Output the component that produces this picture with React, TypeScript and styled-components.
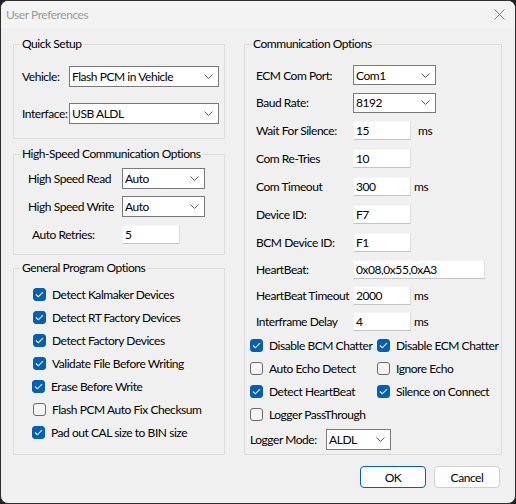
import React from "react";
import styled, { createGlobalStyle } from "styled-components";

const Global = createGlobalStyle`
  html, body { margin: 0; padding: 0; background: #1f1f1f; }
  body { font-family: Lato, "Liberation Sans", sans-serif; font-size: 12px; letter-spacing: -0.45px; color: #000; }
  * { box-sizing: border-box; }
`;

const Window = styled.div`
  width: 516px;
  height: 504px;
  background: #f0f0f0;
  border: 1px solid #2e2e2e;
  border-radius: 8px;
  overflow: hidden;
  display: flex;
  flex-direction: column;
`;

const TitleBar = styled.div`
  height: 27px;
  flex: none;
  background: #f3f3f3;
  display: flex;
  align-items: center;
  justify-content: space-between;
  padding: 0 10px 0 5px;
  color: #9a9a9a;
  font-size: 12px;
`;

const Columns = styled.div`
  display: flex;
  gap: 19px;
  padding: 16px 0 0 12px;
`;

const Column = styled.div<{ $w: number }>`
  width: ${(p) => p.$w}px;
  display: flex;
  flex-direction: column;
  gap: 15px;
`;

const Group = styled.div<{ $h: number; $mt?: number }>`
  border: 1px solid #dcdcdc;
  height: ${(p) => p.$h}px;
  margin-top: ${(p) => p.$mt ?? 0}px;
  display: flex;
  flex-direction: column;
`;

const GroupTitle = styled.div`
  margin: -9px 0 0 6px;
  padding: 0 2px;
  line-height: 16px;
  height: 16px;
  background: #f0f0f0;
  width: fit-content;
  white-space: nowrap;
`;

const Rows = styled.div<{ $pt: number; $pl: number; $gap?: number }>`
  display: flex;
  flex-direction: column;
  padding: ${(p) => p.$pt}px 0 0 ${(p) => p.$pl}px;
  gap: ${(p) => p.$gap ?? 0}px;
`;

const Row = styled.div<{ $h: number }>`
  display: flex;
  align-items: center;
  height: ${(p) => p.$h}px;
  white-space: nowrap;
`;

const Label = styled.span<{ $w: number; $ml?: number }>`
  width: ${(p) => p.$w}px;
  margin-left: ${(p) => p.$ml ?? 0}px;
  flex: none;
`;

const SelectBox = styled.div<{ $w: number; $h?: number }>`
  width: ${(p) => p.$w}px;
  height: ${(p) => p.$h ?? 21}px;
  background: #fff;
  border: 1px solid #7a7a7a;
  display: flex;
  align-items: center;
  justify-content: space-between;
  padding: 0 5px 0 2px;
  flex: none;
`;

const InputBox = styled.div<{ $w: number }>`
  width: ${(p) => p.$w}px;
  height: 19px;
  background: #fff;
  border: 1px solid #f4f4f4;
  border-bottom-color: #c4c4c4;
  border-right-color: #dedede;
  display: flex;
  align-items: center;
  padding: 0 0 0 2px;
  flex: none;
`;

const Unit = styled.span<{ $ml: number }>`
  margin-left: ${(p) => p.$ml}px;
`;

const CheckRow = styled.label<{ $shift?: number }>`
  display: flex;
  align-items: center;
  gap: 6px;
  height: 23px;
  margin-left: ${(p) => p.$shift ?? 0}px;
  white-space: nowrap;
`;

const Box = styled.span<{ $on: boolean }>`
  width: 13px;
  height: 13px;
  flex: none;
  border-radius: 3px;
  background: ${(p) => (p.$on ? "#005fb8" : "#f6f6f6")};
  border: 1px solid ${(p) => (p.$on ? "#005fb8" : "#6a6a6a")};
  display: flex;
  align-items: center;
  justify-content: center;
`;

const CheckGrid = styled.div`
  display: grid;
  grid-template-columns: 127px auto;
  padding-left: 5px;
`;

const Footer = styled.div`
  display: flex;
  justify-content: flex-end;
  gap: 8px;
  padding: 11px 15px 0 0;
`;

const Button = styled.button<{ $primary?: boolean }>`
  width: 66px;
  height: 22px;
  background: #fdfdfd;
  border: 1px solid ${(p) => (p.$primary ? "#005fb8" : "#d0d0d0")};
  border-radius: 4px;
  font: inherit;
  letter-spacing: inherit;
  color: #000;
  padding: 0;
`;

const Chevron = () => (
  <svg width="9" height="5" viewBox="0 0 9 5">
    <path d="M0.5 0.5 L4.5 4.5 L8.5 0.5" fill="none" stroke="#5a5a5a" strokeWidth="1" />
  </svg>
);

const Select = ({ value, w, h }: { value: string; w: number; h?: number }) => (
  <SelectBox $w={w} $h={h}>
    <span>{value}</span>
    <Chevron />
  </SelectBox>
);

const Check = ({ on, children, shift }: { on: boolean; children: React.ReactNode; shift?: number }) => (
  <CheckRow $shift={shift}>
    <Box $on={on}>
      {on && (
        <svg width="9" height="7" viewBox="0 0 9 7">
          <path d="M1 3.5 L3.3 5.8 L8 1.2" fill="none" stroke="#fff" strokeWidth="1.1" />
        </svg>
      )}
    </Box>
    <span>{children}</span>
  </CheckRow>
);

const fields: { label: string; kind: "select" | "input"; value: string; w?: number; h: number; unit?: number }[] = [
  { label: "ECM Com Port:", kind: "select", value: "Com1", h: 28 },
  { label: "Baud Rate:", kind: "select", value: "8192", h: 27 },
  { label: "Wait For Silence:", kind: "input", value: "15", h: 28, unit: 7 },
  { label: "Com Re-Tries", kind: "input", value: "10", h: 28 },
  { label: "Com Timeout", kind: "input", value: "300", h: 28, unit: 3 },
  { label: "Device ID:", kind: "input", value: "F7", h: 28 },
  { label: "BCM Device ID:", kind: "input", value: "F1", h: 28 },
  { label: "HeartBeat:", kind: "input", value: "0x08,0x55,0xA3", w: 132, h: 26 },
  { label: "HeartBeat Timeout", kind: "input", value: "2000", h: 26, unit: 3 },
  { label: "Interframe Delay", kind: "input", value: "4", h: 26, unit: 3 },
];

export default function App() {
  return (
    <>
      <Global />
      <Window>
        <TitleBar>
          <span>User Preferences</span>
          <svg width="11" height="11" viewBox="0 0 11 11">
            <path d="M0.5 0.5 L10.5 10.5 M10.5 0.5 L0.5 10.5" stroke="#7a7a7a" strokeWidth="1" />
          </svg>
        </TitleBar>
        <Columns>
          <Column $w={212}>
            <Group $h={95}>
              <GroupTitle>Quick Setup</GroupTitle>
              <Rows $pt={10} $pl={8} $gap={9}>
                <Row $h={28}>
                  <Label $w={47}>Vehicle:</Label>
                  <Select value="Flash PCM in Vehicle" w={150} />
                </Row>
                <Row $h={28}>
                  <Label $w={47}>Interface:</Label>
                  <Select value="USB ALDL" w={150} />
                </Row>
              </Rows>
            </Group>
            <Group $h={101}>
              <GroupTitle>High-Speed Communication Options</GroupTitle>
              <Rows $pt={2} $pl={14}>
                <Row $h={28}>
                  <Label $w={94}>High Speed Read</Label>
                  <Select value="Auto" w={83} />
                </Row>
                <Row $h={28}>
                  <Label $w={94}>High Speed Write</Label>
                  <Select value="Auto" w={83} />
                </Row>
                <Row $h={28}>
                  <Label $w={90} $ml={4}>Auto Retries:</Label>
                  <InputBox $w={58}>5</InputBox>
                </Row>
              </Rows>
            </Group>
            <Group $h={187} $mt={-2}>
              <GroupTitle>General Program Options</GroupTitle>
              <Rows $pt={7} $pl={19}>
                <Check on>Detect Kalmaker Devices</Check>
                <Check on>Detect RT Factory Devices</Check>
                <Check on>Detect Factory Devices</Check>
                <Check on>Validate File Before Writing</Check>
                <Check on shift={-1}>Erase Before Write</Check>
                <Check on={false}>Flash PCM Auto Fix Checksum</Check>
                <Check on shift={-1}>Pad out CAL size to BIN size</Check>
              </Rows>
            </Group>
          </Column>
          <Column $w={258}>
            <Group $h={411}>
              <GroupTitle>Communication Options</GroupTitle>
              <Rows $pt={9} $pl={11}>
                {fields.map((f) => (
                  <Row key={f.label} $h={f.h}>
                    <Label $w={97}>{f.label}</Label>
                    {f.kind === "select" ? (
                      <Select value={f.value} w={83} h={20} />
                    ) : (
                      <InputBox $w={f.w ?? 58}>{f.value}</InputBox>
                    )}
                    {f.unit !== undefined && <Unit $ml={f.unit}>ms</Unit>}
                  </Row>
                ))}
              </Rows>
              <CheckGrid>
                <Check on>Disable BCM Chatter</Check>
                <Check on>Disable ECM Chatter</Check>
                <Check on={false}>Auto Echo Detect</Check>
                <Check on={false}>Ignore Echo</Check>
                <Check on>Detect HeartBeat</Check>
                <Check on>Silence on Connect</Check>
                <Check on={false}>Logger PassThrough</Check>
              </CheckGrid>
              <Rows $pt={0} $pl={5}>
                <Row $h={26}>
                  <Label $w={76}>Logger Mode:</Label>
                  <Select value="ALDL" w={65} />
                </Row>
              </Rows>
            </Group>
          </Column>
        </Columns>
        <Footer>
          <Button $primary>OK</Button>
          <Button>Cancel</Button>
        </Footer>
      </Window>
    </>
  );
}
